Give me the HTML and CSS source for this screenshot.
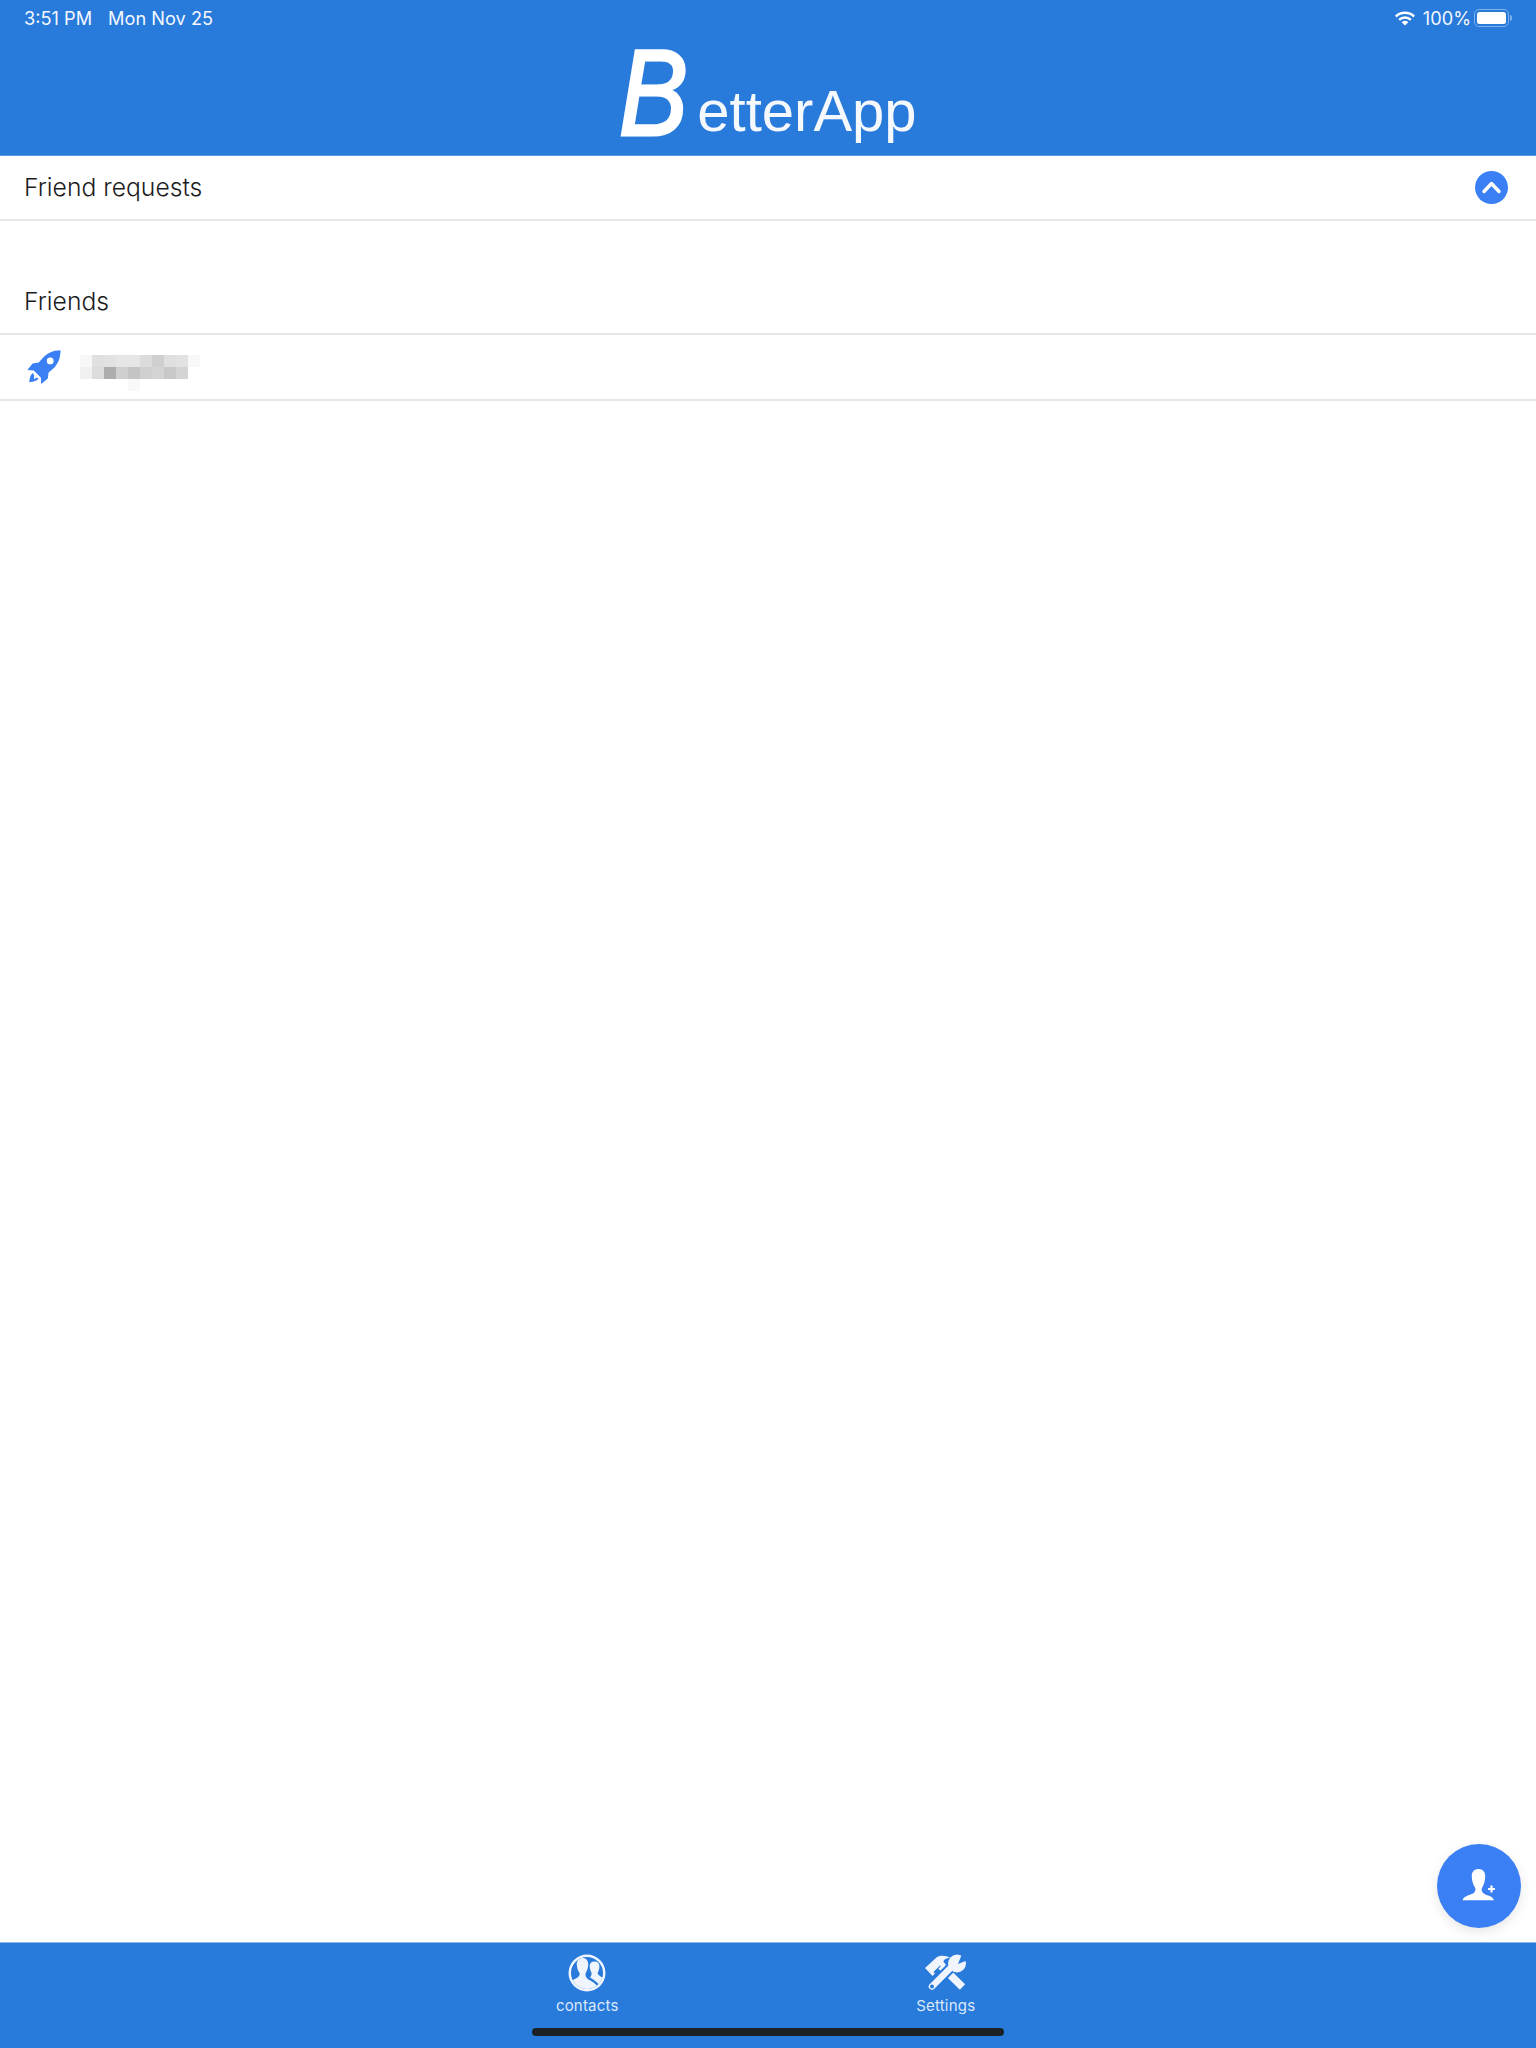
FILE: index.html
```html
<!DOCTYPE html>
<html lang="en">
<head>
<meta charset="utf-8">
<title>BetterApp</title>
<link rel="stylesheet" href="styles.css">
</head>
<body>
<div class="app">
  <header class="header">
    <div class="status">
      <div class="status-left"><span>3:51 PM</span><span>Mon Nov 25</span></div>
      <div class="status-right">
        <svg class="wifi" viewBox="0 0 22 16" width="22" height="16"><path d="M1 5.6A14.5 14.5 0 0 1 21 5.6L19.3 7.4A12 12 0 0 0 2.7 7.4Z" fill="#fff"/><path d="M4.3 9A9.7 9.7 0 0 1 17.7 9L16 10.8A7.3 7.3 0 0 0 6 10.8Z" fill="#fff"/><path d="M7.7 12.3A5 5 0 0 1 14.3 12.3L11 15.6Z" fill="#fff"/></svg>
        <span>100%</span>
        <span class="battery"><span class="battery-fill"></span></span><span class="battery-cap"></span>
      </div>
    </div>
    <div class="logo"><span class="logo-b">B</span><span class="logo-rest">etterApp</span></div>
  </header>
  <main class="content">
    <section class="section-head first">
      <h2>Friend requests</h2>
      <span class="toggle"><svg viewBox="0 0 33 33" width="33" height="33"><path d="M9 20.500L16.500 12.500L24 20.500" fill="none" stroke="#fff" stroke-width="3.400" stroke-linecap="round" stroke-linejoin="round"/></svg></span>
    </section>
    <section class="section-head second"><h2>Friends</h2></section>
    <div class="friend">
      <svg class="rocket" viewBox="0 0 36 36" width="36" height="36"><path fill="#3b7ff5" d="M34.500 1.200C27 1.300 20.600 4.200 15.600 10.200L12.800 13.600 6.600 14.400 1.400 21 7.800 21.500 14.800 28.500 15.300 34.900 21.800 29.600 22.600 23.500 26.200 20.600C32 15.500 34.600 9 34.500 1.200Z"/><circle cx="24.200" cy="11.900" r="3.400" fill="#fff"/><path fill="#3b7ff5" d="M6.800 24.100C5.200 25 3.600 28.400 3.300 33.200 7.800 32.800 11.400 31.400 12.500 29.700L10.600 28.400 7.900 30.200 8.200 26.300Z"/></svg>
      <svg class="pixels" viewBox="0 0 120 36" width="120" height="36">
        <g>
          <rect x="0" width="12" height="12" fill="#f7f7f7"/><rect x="12" width="12" height="12" fill="#e0e0e0"/><rect x="24" width="12" height="12" fill="#e2e2e2"/><rect x="36" width="12" height="12" fill="#e6e6e6"/><rect x="48" width="12" height="12" fill="#e6e6e6"/><rect x="60" width="12" height="12" fill="#dcdcdc"/><rect x="72" width="12" height="12" fill="#cfcfcf"/><rect x="84" width="12" height="12" fill="#e0e0e0"/><rect x="96" width="12" height="12" fill="#e2e2e2"/><rect x="108" width="12" height="12" fill="#f8f8f8"/>
        </g>
        <g transform="translate(0 12)">
          <rect x="0" width="12" height="12" fill="#f0f0f0"/><rect x="12" width="12" height="12" fill="#dcdcdc"/><rect x="24" width="12" height="12" fill="#adadad"/><rect x="36" width="12" height="12" fill="#cfcfcf"/><rect x="48" width="12" height="12" fill="#c4c4c4"/><rect x="60" width="12" height="12" fill="#d0d0d0"/><rect x="72" width="12" height="12" fill="#d4d4d4"/><rect x="84" width="12" height="12" fill="#c8c8c8"/><rect x="96" width="12" height="12" fill="#d4d4d4"/>
        </g>
        <rect x="48" y="24" width="12" height="12" fill="#f9f9f9"/>
      </svg>
    </div>
  </main>
  <button class="fab" type="button" aria-label="Add friend">
    <svg viewBox="0 0 40 36" width="40" height="36"><path fill="#fff" d="M17.500 1C12.500 1 10.500 4.500 10.800 9.500C11 13 12.400 17.500 14 19.500C14.800 21 14.500 23.500 12.800 25C10 27 3 27.500 1.500 32.200H33C32 29.500 29 27.500 25.500 27C22.200 25.800 20.100 23.500 20.800 20.300C22.600 17.500 24 13 24.200 9.500C24.500 4.500 22.500 1 17.500 1Z"/><path d="M27 21H34M30.500 17.500V24.500" stroke="#fff" stroke-width="2.200" fill="none"/></svg>
  </button>
  <nav class="tabbar">
    <div class="tabs">
      <div class="tab tab-contacts">
        <svg viewBox="0 0 38 38" width="38" height="38"><circle cx="19" cy="19" r="18.500" fill="#f0f5fd"/><circle cx="19" cy="19" r="16" fill="#287adb"/><clipPath id="disc"><circle cx="19" cy="19" r="16"/></clipPath><g clip-path="url(#disc)" fill="#f0f5fd"><path d="M14.500 4C10.500 4 8.500 7 8.800 11C9 14 10 17 11.500 19C12 21 11 22.500 9.500 23.500C7 25 4 26 2 28L6 38H32L30 33C27 29 23 27 20.500 25.500C18 24 17 21.500 17.700 19C19 17 20 14 20.200 11C20.500 7 18.500 4 14.500 4Z"/><path d="M26.500 7.500C23 7.500 21.500 9.800 21.700 12.800C21.900 15 22.500 17.200 23.500 18.800C23.900 20.500 23 22.300 21.800 23.300C24.500 25 29 27.500 31.500 31.500L37 30V24C34 23.500 31.500 22 30.200 20.500C29.800 19.800 29.600 19.300 29.800 18.600C30.700 17.200 31.200 15 31.400 12.800C31.600 9.800 30 7.500 26.500 7.500Z"/></g></svg>
        <span>contacts</span>
      </div>
      <div class="tab tab-settings">
        <svg viewBox="0 0 44 38" width="44" height="38"><path fill="#f0f5fd" d="M1 14L13 3C17 1 23 1.500 26 4C22 4 19.500 6 19.500 8L22 10.500L18.500 14L16 11.500L9.500 18L11 19.500L8.500 22Z"/><path d="M17 12L38.500 33" stroke="#f0f5fd" stroke-width="7.500" fill="none"/><path d="M8 32.500L28 12.500" stroke="#287adb" stroke-width="10.500" fill="none"/><path d="M8 32.500L28 12.500" stroke="#f0f5fd" stroke-width="6.500" stroke-linecap="round" fill="none"/><circle cx="33" cy="9.500" r="9" fill="#f0f5fd"/><path d="M34 10L38 0H44V6Z" fill="#287adb"/><circle cx="8" cy="32.500" r="2" fill="#287adb"/></svg>
        <span>Settings</span>
      </div>
    </div>
    <div class="home-bar"></div>
  </nav>
</div>
</body>
</html>
```
FILE: styles.css
```css
* { box-sizing: border-box; }
html, body { margin: 0; padding: 0; }
body { background: #fff; font-family: Inter, "Liberation Sans", sans-serif; }
.app { position: relative; width: 1536px; height: 2048px; display: flex; flex-direction: column; overflow: hidden; }
.header { height: 156px; background: #287adb; color: #fff; display: flex; flex-direction: column; flex: none; border-bottom: 1px solid #5c9ae4; }
.status { height: 36px; padding: 0 24px; display: flex; justify-content: space-between; align-items: center; font-size: 18.200px; color: #f3f7fd; flex: none; }
.status-left { display: flex; gap: 16px; }
.status-right { display: flex; align-items: center; }
.wifi { margin-right: 7px; }
.battery { width: 35px; height: 18px; border: 1.500px solid #7fb0ea; border-radius: 5px; padding: 2px; margin-left: 3px; display: flex; }
.battery-fill { flex: 1; background: #fff; border-radius: 2.500px; }
.battery-cap { width: 2px; height: 6px; background: #7fb0ea; border-radius: 0 2px 2px 0; margin-left: 1px; }
.logo { flex: 1; display: flex; align-items: flex-end; justify-content: center; line-height: 1; }
.logo-b { font-family: "Liberation Sans", sans-serif; font-style: italic; font-size: 123px; line-height: 110px; height: 110px; width: 78px; color: #fff; -webkit-text-stroke: 3px #fff; margin-bottom: 7px; transform: scaleX(.84); transform-origin: left center; }
.logo-rest { font-family: "Liberation Sans", sans-serif; font-size: 58px; line-height: 66px; color: #f5f9fe; margin-bottom: 11px; }
.content { flex: 1; display: flex; flex-direction: column; }
.section-head { display: flex; align-items: center; justify-content: space-between; padding: 0 28px 0 24px; border-bottom: 2px solid #e6e6e6; }
.section-head h2 { margin: 0; font-size: 24.700px; font-weight: 300; color: #1c1c1e; }
.first { height: 65px; padding-bottom: 1px; }
.second { height: 114px; align-items: flex-end; padding-bottom: 17px; }
.toggle { width: 33px; height: 33px; border-radius: 50%; background: #3b7ff5; display: flex; }
.friend { height: 66px; border-bottom: 2px solid #e6e6e6; display: flex; align-items: center; padding-left: 26px; gap: 18px; }
.pixels { margin-top: 12px; flex: none; }
.rocket { flex: none; }
.fab { position: absolute; left: 1437px; top: 1844px; width: 84px; height: 84px; border: 0; border-radius: 50%; background: #3b7ff5; box-shadow: 0 4px 12px rgba(0,0,0,.1); display: flex; align-items: center; justify-content: center; padding: 0 0 0 3px; }
.tabbar { height: 106px; flex: none; background: #287adb; border-top: 1px solid #8ab6ec; display: flex; flex-direction: column; align-items: center; }
.tabs { display: flex; width: 472px; height: 85px; }
.tab { display: flex; flex-direction: column; align-items: center; font-size: 15px; color: #dbe8fa; width: 120px; padding-top: 11px; letter-spacing: .2px; }
.tab svg { flex: none; }
.tab span { margin-top: 5px; line-height: 18px; }
.tab-contacts { margin-left: -3px; }
.tab-settings { margin-left: 242px; }
.home-bar { width: 472px; height: 8px; border-radius: 4px; background: #1c2026; }
```
